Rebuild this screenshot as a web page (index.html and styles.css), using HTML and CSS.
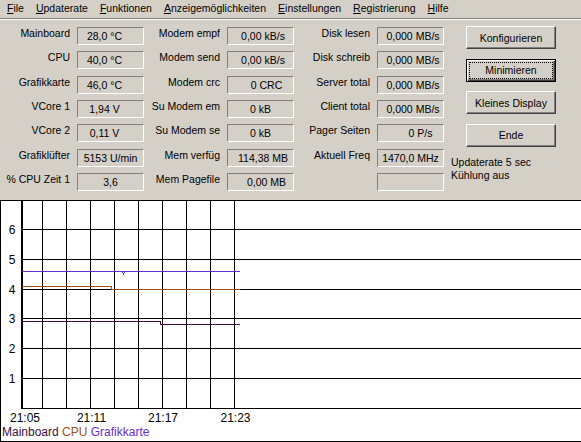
FILE: index.html
```html
<!DOCTYPE html>
<html lang="de">
<head>
    <meta charset="UTF-8">
    <title>Hardware Monitor</title>
    <link rel="stylesheet" href="styles.css">
</head>
<body>
    <div class="menubar">
        <span class="menu"><u>F</u>ile</span>
        <span class="menu"><u>U</u>pdaterate</span>
        <span class="menu"><u>F</u>unktionen</span>
        <span class="menu"><u>A</u>nzeigemöglichkeiten</span>
        <span class="menu"><u>E</u>instellungen</span>
        <span class="menu"><u>R</u>egistrierung</span>
        <span class="menu"><u>H</u>ilfe</span>
    </div>

    <div class="panel">
        <div class="fields">
            <div class="lbl">Mainboard</div><div class="val left">28,0 °C</div>
            <div class="lbl">Modem empf</div><div class="val r1">0,00 kB/s</div>
            <div class="lbl">Disk lesen</div><div class="val r1">0,000 MB/s</div>

            <div class="lbl">CPU</div><div class="val left">40,0 °C</div>
            <div class="lbl">Modem send</div><div class="val r1">0,00 kB/s</div>
            <div class="lbl">Disk schreib</div><div class="val r1">0,000 MB/s</div>

            <div class="lbl">Grafikkarte</div><div class="val left">46,0 °C</div>
            <div class="lbl">Modem crc</div><div class="val r2">0 CRC</div>
            <div class="lbl">Server total</div><div class="val r1">0,000 MB/s</div>

            <div class="lbl">VCore 1</div><div class="val left">1,94 V</div>
            <div class="lbl">Su Modem em</div><div class="val">0 kB</div>
            <div class="lbl">Client total</div><div class="val r1">0,000 MB/s</div>

            <div class="lbl">VCore 2</div><div class="val left">0,11 V</div>
            <div class="lbl">Su Modem se</div><div class="val">0 kB</div>
            <div class="lbl">Pager Seiten</div><div class="val r3">0 P/s</div>

            <div class="lbl">Grafiklüfter</div><div class="val">5153 U/min</div>
            <div class="lbl">Mem verfüg</div><div class="val r1">114,38 MB</div>
            <div class="lbl">Aktuell Freq</div><div class="val">1470,0 MHz</div>

            <div class="lbl">% CPU Zeit 1</div><div class="val">3,6</div>
            <div class="lbl">Mem Pagefile</div><div class="val r2">0,00 MB</div>
            <div class="lbl"></div><div class="val"></div>
        </div>

        <div class="side">
            <div class="buttons">
                <button class="btn">Konfigurieren</button>
                <button class="btn default">Minimieren</button>
                <button class="btn">Kleines Display</button>
                <button class="btn">Ende</button>
            </div>
            <div class="status">
                <div>Updaterate 5 sec</div>
                <div>Kühlung aus</div>
            </div>
        </div>
    </div>

    <div class="chart">
        <svg class="plot" width="580" height="224" viewBox="0 0 580 224">
            <!-- horizontal grid -->
            <g class="grid">
                <rect x="20" y="28" width="560" height="1"/>
                <rect x="20" y="58" width="560" height="1"/>
                <rect x="20" y="88" width="560" height="1"/>
                <rect x="20" y="117" width="560" height="1"/>
                <rect x="20" y="147" width="560" height="1"/>
                <rect x="20" y="177" width="560" height="1"/>
                <rect x="20" y="207" width="560" height="1"/>
            </g>
            <!-- vertical grid -->
            <g class="grid">
                <rect x="41" y="0" width="1" height="207"/>
                <rect x="65" y="0" width="1" height="207"/>
                <rect x="89" y="0" width="1" height="207"/>
                <rect x="113" y="0" width="1" height="207"/>
                <rect x="137" y="0" width="1" height="207"/>
                <rect x="161" y="0" width="1" height="207"/>
                <rect x="185" y="0" width="1" height="207"/>
                <rect x="209" y="0" width="1" height="207"/>
                <rect x="233" y="0" width="1" height="207"/>
                <rect x="20" y="0" width="2" height="208"/>
            </g>

            <!-- Grafikkarte -->
            <g class="s-gpu">
                <rect x="21" y="70" width="218" height="1"/>
                <rect x="121" y="71" width="1" height="1"/>
                <rect x="122" y="72" width="1" height="2"/>
                <rect x="123" y="71" width="1" height="1"/>
            </g>
            <!-- CPU -->
            <g class="s-cpu">
                <rect x="21" y="85" width="90" height="1"/>
                <rect x="110" y="86" width="1" height="2"/>
                <rect x="110" y="88" width="129" height="1"/>
            </g>
            <!-- Mainboard -->
            <g class="s-mb">
                <rect x="21" y="120" width="139" height="1"/>
                <rect x="159" y="121" width="1" height="2"/>
                <rect x="159" y="123" width="80" height="1"/>
            </g>

            <g class="ticks">
                <text x="11" y="32.5">6</text>
                <text x="11" y="62.5">5</text>
                <text x="11" y="92.5">4</text>
                <text x="11" y="121.5">3</text>
                <text x="11" y="151.5">2</text>
                <text x="11" y="181.5">1</text>
                <text x="24" y="221">21:05</text>
                <text x="90.5" y="221">21:11</text>
                <text x="162" y="221">21:17</text>
                <text x="234.5" y="221">21:23</text>
            </g>
        </svg>
        <div class="legend">
            <span class="c-mb">Mainboard</span>
            <span class="c-cpu">CPU</span>
            <span class="c-gpu">Grafikkarte</span>
        </div>
    </div>
</body>
</html>
```

FILE: styles.css
```css
body {
    margin: 0;
    width: 581px;
    height: 442px;
    overflow: hidden;
    background-color: #d4d0c8;
    font-family: "Liberation Sans", Arial, sans-serif;
    font-size: 10.5px;
    color: #000;
}
.menubar {
    display: flex;
    height: 18px;
    line-height: 17px;
    padding-left: 1px;
    border-bottom: 1px solid #808080;
}
.menu {
    padding: 0 6px;
    white-space: nowrap;
}
.panel {
    display: flex;
    height: 180px;
    border-top: 1px solid #fff;
}
.fields {
    display: grid;
    grid-template-columns: 77px 67px 83px 67px 83px 67px;
    grid-template-rows: repeat(7, 18px);
    row-gap: 6.33px;
    align-content: start;
    padding-top: 7px;
}
.lbl {
    text-align: right;
    padding-right: 7px;
    line-height: 13px;
    white-space: nowrap;
}
.val {
    box-sizing: border-box;
    height: 18px;
    border: 1px solid;
    border-color: #808080 #fff #fff #808080;
    line-height: 16px;
    text-align: center;
    white-space: nowrap;
}
.val.left {
    padding-right: 12px;
}
.val.r1 {
    padding-left: 5px;
}
.val.r2 {
    padding-left: 12px;
}
.val.r3 {
    padding-left: 20px;
}
.side {
    display: flex;
    flex-direction: column;
    padding-top: 6px;
}
.buttons {
    display: flex;
    flex-direction: column;
    gap: 9.67px;
    margin-left: 22px;
}
.btn {
    box-sizing: border-box;
    width: 90px;
    height: 23px;
    padding: 0;
    background-color: #d4d0c8;
    border: 1px solid;
    border-color: #fff #404040 #404040 #fff;
    box-shadow: inset -1px -1px #808080;
    font: inherit;
    color: #000;
    text-align: center;
}
.btn.default {
    border-color: #000;
    box-shadow: inset 1px 1px #fff, inset -1px -1px #404040, inset -2px -2px #808080;
    outline: 1px dotted #000;
    outline-offset: -4px;
}
.status {
    margin-top: 9px;
    padding-left: 7px;
    line-height: 13px;
}
.chart {
    background-color: #fff;
    border: 1px solid #000;
    border-right: none;
    padding-bottom: 2px;
}
.plot {
    display: block;
    shape-rendering: crispEdges;
}
.grid {
    fill: #000;
}
.s-gpu { fill: #6a2ccc; }
.s-cpu { fill: #a0501a; }
.s-mb { fill: #3c0c3c; }
.ticks text {
    font-family: "Liberation Sans", Arial, sans-serif;
    font-size: 12px;
    fill: #000;
    text-anchor: middle;
}
.legend {
    font-size: 12px;
    line-height: 14px;
    padding-left: 1px;
    white-space: nowrap;
}
.c-mb { color: #3c0c3c; }
.c-cpu { color: #a0501a; }
.c-gpu { color: #6a2ccc; }
```
